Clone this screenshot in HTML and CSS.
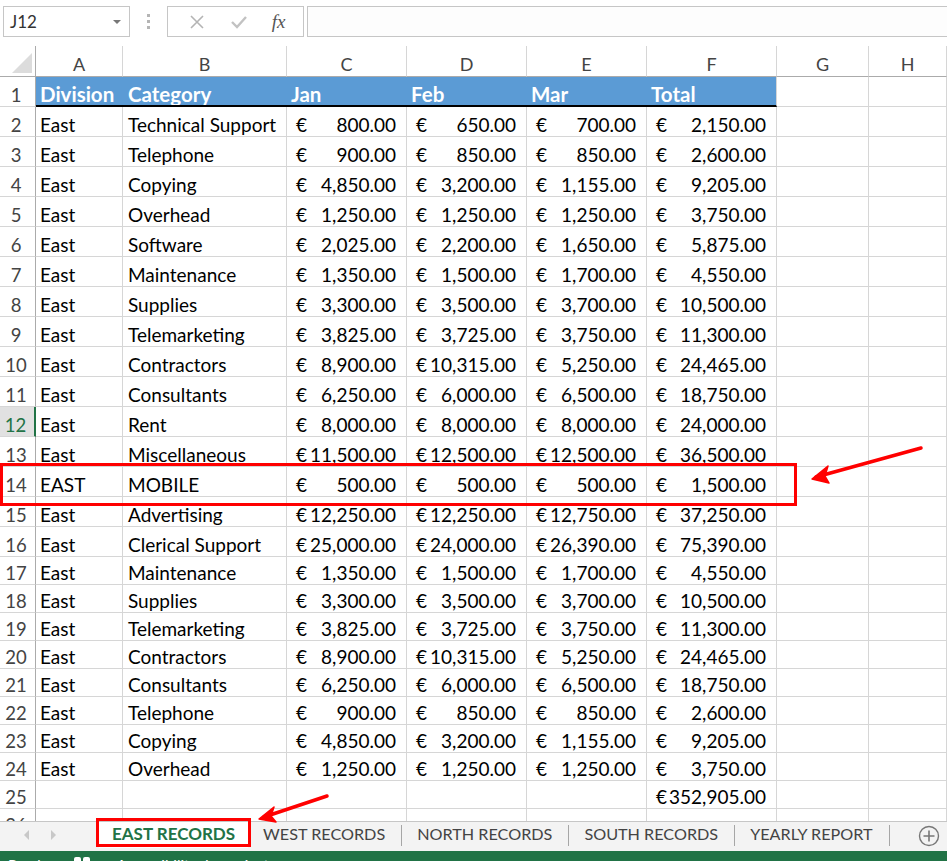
FILE: index.html
```html
<!DOCTYPE html>
<html lang="en">
<head>
  <meta charset="UTF-8">
  <title>EAST RECORDS - Excel</title>
  <link rel="stylesheet" href="styles.css">
</head>
<body>
  <div class="formula-bar">
    <div class="name-box">
      <span>J12</span>
      <span class="drop"></span>
    </div>
    <div class="grip"><i></i><i></i><i></i></div>
    <div class="fx-buttons">
      <svg width="18" height="18" viewBox="0 0 18 18"><path d="M3 3 L15 15 M15 3 L3 15" stroke="#b4b4b4" stroke-width="1.6" fill="none"/></svg>
      <svg width="20" height="18" viewBox="0 0 20 18"><path d="M3 9 L8 14 L17 4" stroke="#c2c2c2" stroke-width="2.4" fill="none"/></svg>
      <span class="fx">fx</span>
    </div>
    <div class="formula-input"></div>
  </div>

  <div class="sheet">
    <div class="row col-heads">
      <div class="rh corner"><span class="tri"></span></div>
      <div class="c a">A</div><div class="c b">B</div><div class="c m">C</div><div class="c m">D</div>
      <div class="c m">E</div><div class="c f">F</div><div class="c g">G</div><div class="c h">H</div>
    </div>

    <div class="row head">
      <div class="rh">1</div>
      <div class="c a hd">Division</div><div class="c b hd">Category</div><div class="c m hd">Jan</div>
      <div class="c m hd">Feb</div><div class="c m hd">Mar</div><div class="c f hd">Total</div>
      <div class="c g"></div><div class="c h"></div>
    </div>

    <div class="row"><div class="rh">2</div><div class="c a">East</div><div class="c b">Technical Support</div><div class="c m eu"><span>€</span>800.00</div><div class="c m eu"><span>€</span>650.00</div><div class="c m eu"><span>€</span>700.00</div><div class="c f eu"><span>€</span>2,150.00</div><div class="c g"></div><div class="c h"></div></div>
    <div class="row"><div class="rh">3</div><div class="c a">East</div><div class="c b">Telephone</div><div class="c m eu"><span>€</span>900.00</div><div class="c m eu"><span>€</span>850.00</div><div class="c m eu"><span>€</span>850.00</div><div class="c f eu"><span>€</span>2,600.00</div><div class="c g"></div><div class="c h"></div></div>
    <div class="row"><div class="rh">4</div><div class="c a">East</div><div class="c b">Copying</div><div class="c m eu"><span>€</span>4,850.00</div><div class="c m eu"><span>€</span>3,200.00</div><div class="c m eu"><span>€</span>1,155.00</div><div class="c f eu"><span>€</span>9,205.00</div><div class="c g"></div><div class="c h"></div></div>
    <div class="row"><div class="rh">5</div><div class="c a">East</div><div class="c b">Overhead</div><div class="c m eu"><span>€</span>1,250.00</div><div class="c m eu"><span>€</span>1,250.00</div><div class="c m eu"><span>€</span>1,250.00</div><div class="c f eu"><span>€</span>3,750.00</div><div class="c g"></div><div class="c h"></div></div>
    <div class="row"><div class="rh">6</div><div class="c a">East</div><div class="c b">Software</div><div class="c m eu"><span>€</span>2,025.00</div><div class="c m eu"><span>€</span>2,200.00</div><div class="c m eu"><span>€</span>1,650.00</div><div class="c f eu"><span>€</span>5,875.00</div><div class="c g"></div><div class="c h"></div></div>
    <div class="row"><div class="rh">7</div><div class="c a">East</div><div class="c b">Maintenance</div><div class="c m eu"><span>€</span>1,350.00</div><div class="c m eu"><span>€</span>1,500.00</div><div class="c m eu"><span>€</span>1,700.00</div><div class="c f eu"><span>€</span>4,550.00</div><div class="c g"></div><div class="c h"></div></div>
    <div class="row"><div class="rh">8</div><div class="c a">East</div><div class="c b">Supplies</div><div class="c m eu"><span>€</span>3,300.00</div><div class="c m eu"><span>€</span>3,500.00</div><div class="c m eu"><span>€</span>3,700.00</div><div class="c f eu"><span>€</span>10,500.00</div><div class="c g"></div><div class="c h"></div></div>
    <div class="row"><div class="rh">9</div><div class="c a">East</div><div class="c b">Telemarketing</div><div class="c m eu"><span>€</span>3,825.00</div><div class="c m eu"><span>€</span>3,725.00</div><div class="c m eu"><span>€</span>3,750.00</div><div class="c f eu"><span>€</span>11,300.00</div><div class="c g"></div><div class="c h"></div></div>
    <div class="row"><div class="rh">10</div><div class="c a">East</div><div class="c b">Contractors</div><div class="c m eu"><span>€</span>8,900.00</div><div class="c m eu"><span>€</span>10,315.00</div><div class="c m eu"><span>€</span>5,250.00</div><div class="c f eu"><span>€</span>24,465.00</div><div class="c g"></div><div class="c h"></div></div>
    <div class="row"><div class="rh">11</div><div class="c a">East</div><div class="c b">Consultants</div><div class="c m eu"><span>€</span>6,250.00</div><div class="c m eu"><span>€</span>6,000.00</div><div class="c m eu"><span>€</span>6,500.00</div><div class="c f eu"><span>€</span>18,750.00</div><div class="c g"></div><div class="c h"></div></div>
    <div class="row"><div class="rh active">12</div><div class="c a">East</div><div class="c b">Rent</div><div class="c m eu"><span>€</span>8,000.00</div><div class="c m eu"><span>€</span>8,000.00</div><div class="c m eu"><span>€</span>8,000.00</div><div class="c f eu"><span>€</span>24,000.00</div><div class="c g"></div><div class="c h"></div></div>
    <div class="row"><div class="rh">13</div><div class="c a">East</div><div class="c b">Miscellaneous</div><div class="c m eu"><span>€</span>11,500.00</div><div class="c m eu"><span>€</span>12,500.00</div><div class="c m eu"><span>€</span>12,500.00</div><div class="c f eu"><span>€</span>36,500.00</div><div class="c g"></div><div class="c h"></div></div>
    <div class="row"><div class="rh">14</div><div class="c a">EAST</div><div class="c b">MOBILE</div><div class="c m eu"><span>€</span>500.00</div><div class="c m eu"><span>€</span>500.00</div><div class="c m eu"><span>€</span>500.00</div><div class="c f eu"><span>€</span>1,500.00</div><div class="c g"></div><div class="c h"></div></div>
    <div class="row"><div class="rh">15</div><div class="c a">East</div><div class="c b">Advertising</div><div class="c m eu"><span>€</span>12,250.00</div><div class="c m eu"><span>€</span>12,250.00</div><div class="c m eu"><span>€</span>12,750.00</div><div class="c f eu"><span>€</span>37,250.00</div><div class="c g"></div><div class="c h"></div></div>
    <div class="row"><div class="rh">16</div><div class="c a">East</div><div class="c b">Clerical Support</div><div class="c m eu"><span>€</span>25,000.00</div><div class="c m eu"><span>€</span>24,000.00</div><div class="c m eu"><span>€</span>26,390.00</div><div class="c f eu"><span>€</span>75,390.00</div><div class="c g"></div><div class="c h"></div></div>
    <div class="row short"><div class="rh">17</div><div class="c a">East</div><div class="c b">Maintenance</div><div class="c m eu"><span>€</span>1,350.00</div><div class="c m eu"><span>€</span>1,500.00</div><div class="c m eu"><span>€</span>1,700.00</div><div class="c f eu"><span>€</span>4,550.00</div><div class="c g"></div><div class="c h"></div></div>
    <div class="row short"><div class="rh">18</div><div class="c a">East</div><div class="c b">Supplies</div><div class="c m eu"><span>€</span>3,300.00</div><div class="c m eu"><span>€</span>3,500.00</div><div class="c m eu"><span>€</span>3,700.00</div><div class="c f eu"><span>€</span>10,500.00</div><div class="c g"></div><div class="c h"></div></div>
    <div class="row short"><div class="rh">19</div><div class="c a">East</div><div class="c b">Telemarketing</div><div class="c m eu"><span>€</span>3,825.00</div><div class="c m eu"><span>€</span>3,725.00</div><div class="c m eu"><span>€</span>3,750.00</div><div class="c f eu"><span>€</span>11,300.00</div><div class="c g"></div><div class="c h"></div></div>
    <div class="row short"><div class="rh">20</div><div class="c a">East</div><div class="c b">Contractors</div><div class="c m eu"><span>€</span>8,900.00</div><div class="c m eu"><span>€</span>10,315.00</div><div class="c m eu"><span>€</span>5,250.00</div><div class="c f eu"><span>€</span>24,465.00</div><div class="c g"></div><div class="c h"></div></div>
    <div class="row short"><div class="rh">21</div><div class="c a">East</div><div class="c b">Consultants</div><div class="c m eu"><span>€</span>6,250.00</div><div class="c m eu"><span>€</span>6,000.00</div><div class="c m eu"><span>€</span>6,500.00</div><div class="c f eu"><span>€</span>18,750.00</div><div class="c g"></div><div class="c h"></div></div>
    <div class="row short"><div class="rh">22</div><div class="c a">East</div><div class="c b">Telephone</div><div class="c m eu"><span>€</span>900.00</div><div class="c m eu"><span>€</span>850.00</div><div class="c m eu"><span>€</span>850.00</div><div class="c f eu"><span>€</span>2,600.00</div><div class="c g"></div><div class="c h"></div></div>
    <div class="row short"><div class="rh">23</div><div class="c a">East</div><div class="c b">Copying</div><div class="c m eu"><span>€</span>4,850.00</div><div class="c m eu"><span>€</span>3,200.00</div><div class="c m eu"><span>€</span>1,155.00</div><div class="c f eu"><span>€</span>9,205.00</div><div class="c g"></div><div class="c h"></div></div>
    <div class="row short"><div class="rh">24</div><div class="c a">East</div><div class="c b">Overhead</div><div class="c m eu"><span>€</span>1,250.00</div><div class="c m eu"><span>€</span>1,250.00</div><div class="c m eu"><span>€</span>1,250.00</div><div class="c f eu"><span>€</span>3,750.00</div><div class="c g"></div><div class="c h"></div></div>
    <div class="row short"><div class="rh">25</div><div class="c a"></div><div class="c b"></div><div class="c m"></div><div class="c m"></div><div class="c m"></div><div class="c f eu"><span>€</span>352,905.00</div><div class="c g"></div><div class="c h"></div></div>
    <div class="row short"><div class="rh">26</div><div class="c a"></div><div class="c b"></div><div class="c m"></div><div class="c m"></div><div class="c m"></div><div class="c f"></div><div class="c g"></div><div class="c h"></div></div>
  </div>

  <div class="tab-bar">
    <div class="tab-nav">
      <span class="nav-prev"></span>
      <span class="nav-next"></span>
    </div>
    <div class="tab active">EAST RECORDS</div>
    <div class="tab">WEST RECORDS</div>
    <span class="sep"></span>
    <div class="tab">NORTH RECORDS</div>
    <span class="sep"></span>
    <div class="tab">SOUTH RECORDS</div>
    <span class="sep"></span>
    <div class="tab">YEARLY REPORT</div>
    <span class="sep"></span>
    <div class="add-sheet">
      <svg width="22" height="22" viewBox="0 0 22 22"><circle cx="11" cy="11" r="9.5" stroke="#777" stroke-width="1.4" fill="none"/><path d="M11 5.5 V16.5 M5.5 11 H16.5" stroke="#777" stroke-width="1.6"/></svg>
    </div>
  </div>

  <div class="status-bar">
    <span>Ready</span>
    <span class="status-icon"><i></i><i></i></span>
    <span>Accessibility: Investigate</span>
  </div>

  <!-- red annotations drawn over the screenshot -->
  <svg class="marks" width="947" height="861" viewBox="0 0 947 861">
    <rect x="1.5" y="464.5" width="794" height="40" fill="none" stroke="#f00" stroke-width="3"/>
    <path d="M921 448 L816 477" stroke="#f00" stroke-width="3.5" fill="none" stroke-linecap="round"/>
    <path d="M812 479 L828 466 L825 476 L829 483 Z" fill="#f00" stroke="#f00" stroke-width="1.5" stroke-linejoin="round"/>
    <rect x="97.5" y="819.5" width="152" height="26" fill="none" stroke="#f00" stroke-width="3"/>
    <path d="M327 796 L264 817" stroke="#f00" stroke-width="3.5" fill="none" stroke-linecap="round"/>
    <path d="M259 819 L274 807 L271 816 L276 822 Z" fill="#f00" stroke="#f00" stroke-width="1.5" stroke-linejoin="round"/>
  </svg>
</body>
</html>
```

FILE: styles.css
```css
body {
  margin: 0;
  width: 947px;
  height: 861px;
  overflow: hidden;
  position: relative;
  font-family: Lato, "Open Sans", sans-serif;
  background: #fff;
  color: #000;
}

/* formula bar */
.formula-bar {
  height: 46px;
  display: flex;
  align-items: flex-start;
  padding-top: 6px;
  box-sizing: border-box;
}

.name-box {
  margin-left: 3px;
  width: 127px;
  height: 31px;
  box-sizing: border-box;
  border: 1px solid #c6c6c6;
  display: flex;
  align-items: center;
  justify-content: space-between;
  padding: 0 8px 0 6px;
  font-size: 17px;
  color: #333;
}

.drop {
  width: 0;
  height: 0;
  border-left: 4px solid transparent;
  border-right: 4px solid transparent;
  border-top: 4px solid #777;
}

.grip {
  width: 37px;
  height: 31px;
  display: flex;
  flex-direction: column;
  align-items: center;
  justify-content: center;
  gap: 3px;
}

.grip i {
  display: block;
  width: 3px;
  height: 3px;
  background: #b5b5b5;
}

.fx-buttons {
  width: 137px;
  height: 31px;
  box-sizing: border-box;
  border: 1px solid #c6c6c6;
  display: flex;
  align-items: center;
  justify-content: space-around;
  padding: 0 6px 0 8px;
}

.fx {
  font-family: "Liberation Serif", serif;
  font-style: italic;
  font-size: 19px;
  color: #555;
}

.formula-input {
  flex: 1;
  margin-left: 3px;
  height: 31px;
  box-sizing: border-box;
  border: 1px solid #c6c6c6;
  border-right: none;
  background: #fdfdfd;
}

/* grid */
.sheet {
  height: 775px;
  overflow: hidden;
}

.row {
  display: flex;
  height: 30px;
}

.row.short {
  height: 28px;
}

.row.col-heads {
  height: 31px;
}

.rh, .c {
  box-sizing: border-box;
  border-bottom: 1px solid #d6d6d6;
  border-right: 1px solid #d6d6d6;
  display: flex;
  align-items: flex-end;
  font-size: 19px;
  line-height: 22px;
  padding-bottom: 0;
  white-space: nowrap;
  overflow: hidden;
}

.rh {
  width: 36px;
  flex: none;
  justify-content: center;
  color: #444;
  border-right-color: #ababab;
  padding-right: 3px;
  font-size: 18.5px;
}

.rh.active {
  background: #e1e1e1;
  color: #217346;
  border-right: 2px solid #217346;
}

.c {
  padding-left: 4px;
  padding-right: 10px;
}

.a { width: 87px; }
.b { width: 164px; }
.m { width: 120px; }
.f { width: 130px; }
.g { width: 92px; }
.h { flex: 1; }

.c.b { padding-left: 5px; }

.col-heads .rh, .col-heads .c {
  justify-content: center;
  color: #444;
  font-size: 18px;
  padding: 0 0 1px;
  border-bottom-color: #ababab;
}

.corner {
  position: relative;
}

.tri {
  position: absolute;
  right: 3px;
  bottom: 3px;
  width: 0;
  height: 0;
  border-left: 20px solid transparent;
  border-bottom: 20px solid #dcdcdc;
}

.hd {
  background: #5b9bd5;
  color: #fff;
  font-weight: bold;
  font-size: 20.5px;
  border-right: none;
  border-bottom: 2px solid #000;
  padding-bottom: 0;
}

.c.f.hd {
  border-right: 1px solid #d6d6d6;
}

.eu {
  justify-content: space-between;
  padding-left: 9px;
}

/* sheet tabs */
.tab-bar {
  height: 30px;
  box-sizing: border-box;
  border-top: 1px solid #c6c6c6;
  background: #f3f3f3;
  display: flex;
  align-items: flex-start;
}

.tab-nav {
  width: 99px;
  height: 26px;
  display: flex;
  align-items: center;
  gap: 22px;
  padding-left: 24px;
  box-sizing: border-box;
}

.nav-prev, .nav-next {
  width: 0;
  height: 0;
  border-top: 5px solid transparent;
  border-bottom: 5px solid transparent;
}

.nav-prev {
  border-right: 5px solid #c8c8c8;
}

.nav-next {
  border-left: 5px solid #c8c8c8;
}

.tab {
  padding: 1px 16px 0 15px;
  font-size: 16.2px;
  color: #444;
  line-height: 22px;
}

.tab.active {
  background: #fff;
  color: #217346;
  font-weight: bold;
  font-size: 17px;
  padding: 1px 13px 3px;
}

.sep {
  width: 1px;
  height: 21px;
  margin-top: 3px;
  background: #a6a6a6;
}

.add-sheet {
  margin-left: auto;
  margin-right: 7px;
  margin-top: 3px;
  display: flex;
}

/* status bar (mostly off screen) */
.status-bar {
  height: 30px;
  background: #217346;
  color: #fff;
  font-size: 15px;
  display: flex;
  align-items: flex-start;
  gap: 26px;
  padding: 5px 0 0 8px;
  box-sizing: border-box;
}

.status-icon {
  display: flex;
  gap: 2px;
  padding-top: 1px;
}

.status-icon i {
  display: block;
  width: 7px;
  height: 8px;
  background: #fff;
  border-radius: 2px;
}

.marks {
  position: absolute;
  top: 0;
  left: 0;
  pointer-events: none;
}
```
